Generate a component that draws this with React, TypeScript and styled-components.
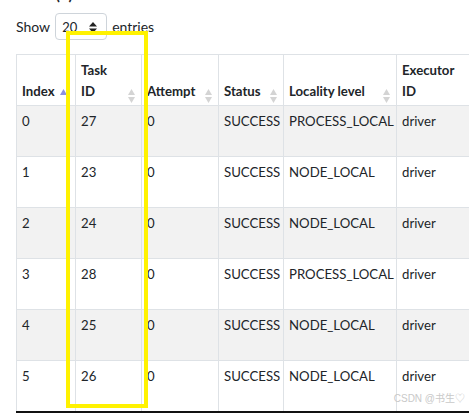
import React from "react";
import styled, { createGlobalStyle } from "styled-components";

const Global = createGlobalStyle`
  html, body { margin: 0; padding: 0; overflow: hidden; background: #fff; }
  body {
    font-family: Lato, "Noto Sans", sans-serif;
    font-size: 13.2px;
    line-height: 21px;
    color: #212529;
  }
`;

const Page = styled.div`
  position: relative;
  width: 469px;
  height: 417px;
  overflow: hidden;
  padding-left: 16px;
  box-sizing: border-box;
`;

const Heading = styled.h4`
  margin: -15px 0 0;
  font-size: 15px;
  font-weight: 700;
  line-height: 18px;
  white-space: nowrap;
`;

const LengthRow = styled.div`
  display: flex;
  align-items: center;
  gap: 5px;
  margin-top: 10px;
  height: 27px;
  font-size: 14px;
`;

const SelectBox = styled.div`
  width: 52px;
  height: 27px;
  box-sizing: border-box;
  border: 1px solid #ced4da;
  border-radius: 4px;
  display: flex;
  align-items: center;
  justify-content: space-between;
  padding: 1px 9px 0 6px;
  font-size: 13px;
`;

const Table = styled.table`
  margin-top: 14px;
  border-collapse: collapse;
  table-layout: fixed;
  width: 470px;
  border-bottom: 2px solid #111;
`;

const HeadRow = styled.tr`
  height: 51px;
`;

const Th = styled.th`
  position: relative;
  border: 1px solid #dee2e6;
  padding: 4px 18px 3px 5px;
  text-align: left;
  vertical-align: bottom;
  font-weight: 700;
  background: #fff;
`;

const BodyRow = styled.tr<{ $striped: boolean }>`
  height: 51px;
  background: ${(p) => (p.$striped ? "#f2f2f2" : "#fff")};
`;

const Td = styled.td`
  border: 1px solid #dee2e6;
  padding: 5px 5px 4px;
  vertical-align: top;
  white-space: nowrap;
  overflow: hidden;
`;

const SortIcon = styled.span<{ $right: number }>`
  position: absolute;
  right: ${(p) => p.$right}px;
  bottom: 3px;
  width: 7px;
  height: 14px;
  display: block;
`;

const Highlight = styled.div`
  position: absolute;
  left: 66px;
  top: 31px;
  width: 82px;
  height: 377px;
  box-sizing: border-box;
  border: 4px solid #fff200;
  pointer-events: none;
`;

const Watermark = styled.div`
  position: absolute;
  right: 4px;
  top: 393px;
  font-family: "Liberation Sans", "Noto Sans CJK SC", sans-serif;
  font-size: 10px;
  line-height: 12px;
  color: #c9c9c9;
`;

const Sort = ({ active, right }: { active?: boolean; right: number }) => (
  <SortIcon $right={right}>
    <svg width="7" height="14" viewBox="0 0 7 14">
      <polygon points="0,6 3.5,0 7,6" fill={active ? "#8d90e0" : "#d4d4d4"} />
      {!active && <polygon points="0,8 7,8 3.5,14" fill="#d4d4d4" />}
    </svg>
  </SortIcon>
);

const UpDown = () => (
  <svg width="8" height="11" viewBox="0 0 8 11">
    <polygon points="0,4.5 4,0 8,4.5" fill="#222" />
    <polygon points="0,6.5 8,6.5 4,11" fill="#222" />
  </svg>
);

const rows = [
  ["0", "27", "0", "SUCCESS", "PROCESS_LOCAL", "driver"],
  ["1", "23", "0", "SUCCESS", "NODE_LOCAL", "driver"],
  ["2", "24", "0", "SUCCESS", "NODE_LOCAL", "driver"],
  ["3", "28", "0", "SUCCESS", "PROCESS_LOCAL", "driver"],
  ["4", "25", "0", "SUCCESS", "NODE_LOCAL", "driver"],
  ["5", "26", "0", "SUCCESS", "NODE_LOCAL", "driver"],
];

const widths = [59, 66, 77, 65, 113, 90];

export default function App() {
  return (
    <>
      <Global />
      <Page>
        <Heading>Tasks (6)</Heading>
        <LengthRow>
          <span>Show</span>
          <SelectBox>
            <span>20</span>
            <UpDown />
          </SelectBox>
          <span>entries</span>
        </LengthRow>
        <Table>
          <colgroup>
            {widths.map((w, i) => (
              <col key={i} style={{ width: w }} />
            ))}
          </colgroup>
          <thead>
            <HeadRow>
              <Th>
                Index
                <Sort active right={8} />
              </Th>
              <Th>
                Task ID
                <Sort right={6} />
              </Th>
              <Th>
                Attempt
                <Sort right={6} />
              </Th>
              <Th>
                Status
                <Sort right={6} />
              </Th>
              <Th>
                Locality level
                <Sort right={6} />
              </Th>
              <Th>
                Executor ID
                <Sort right={6} />
              </Th>
            </HeadRow>
          </thead>
          <tbody>
            {rows.map((r, i) => (
              <BodyRow key={i} $striped={i % 2 === 0}>
                {r.map((c, j) => (
                  <Td key={j}>{c}</Td>
                ))}
              </BodyRow>
            ))}
          </tbody>
        </Table>
        <Highlight />
        <Watermark>CSDN @书生♡</Watermark>
      </Page>
    </>
  );
}
